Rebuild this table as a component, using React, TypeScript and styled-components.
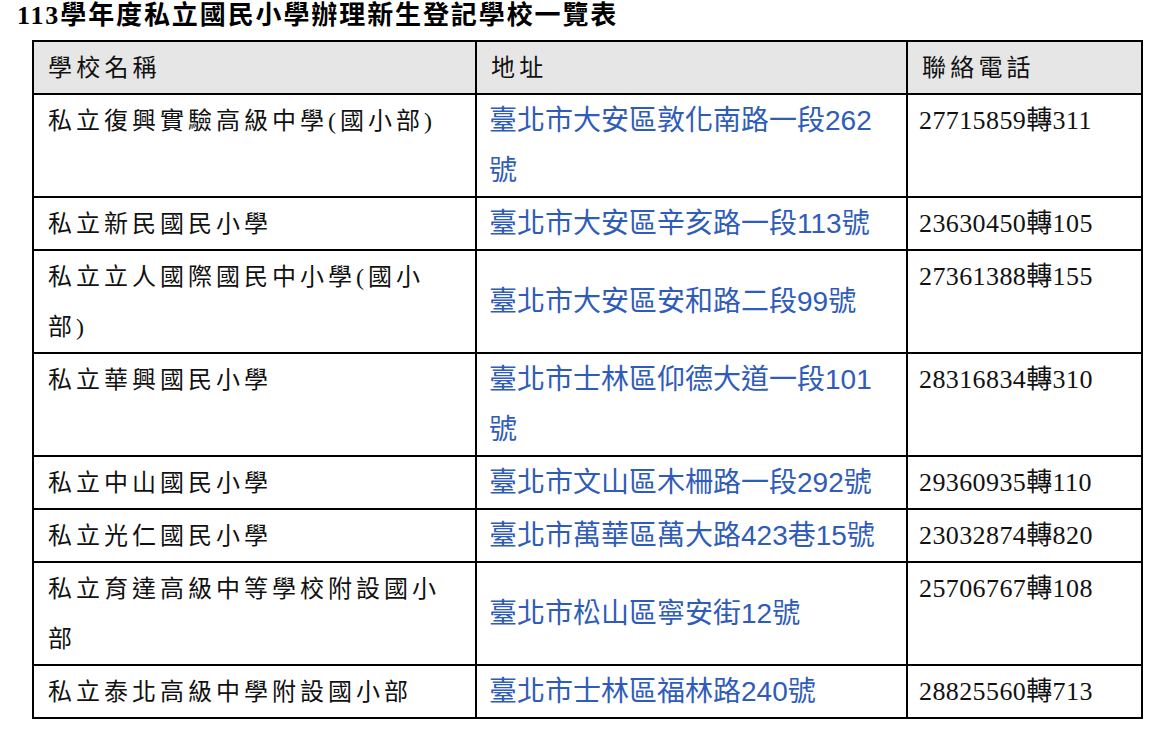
import React from "react";
import styled, { createGlobalStyle } from "styled-components";

const GlobalStyle = createGlobalStyle`
  body {
    margin: 0;
    background: #ffffff;
    color: #111;
  }
`;

const Page = styled.div`
  padding: 1px 0 0 17px;
`;

const Title = styled.h1`
  margin: 0;
  font-family: "Liberation Serif", "Noto Sans CJK TC", serif;
  font-weight: 700;
  font-size: 26px;
  letter-spacing: 1.9px;
  line-height: 30px;
  color: #000;
`;

const Table = styled.table`
  margin: 9px 0 0 15px;
  width: 1109px;
  border-collapse: collapse;
  table-layout: fixed;
`;

const HeadCell = styled.th`
  border: 2px solid #000;
  background: #e6e6e6;
  text-align: left;
  font-weight: 400;
  font-family: "Liberation Serif", "Noto Sans CJK TC", serif;
  font-size: 24px;
  letter-spacing: 4.2px;
  line-height: 50px;
  padding: 1px 12px 0 14px;
  color: #111;
`;

const NameCell = styled.td`
  border: 2px solid #000;
  vertical-align: top;
  font-family: "Liberation Serif", "Noto Sans CJK TC", serif;
  font-size: 24px;
  letter-spacing: 4px;
  line-height: 50px;
  padding: 1px 28px 0 14px;
  color: #111;
`;

const AddressCell = styled.td`
  border: 2px solid #000;
  vertical-align: middle;
  font-family: "Liberation Sans", "Noto Sans CJK TC", sans-serif;
  font-size: 28px;
  line-height: 50px;
  padding: 1px 22px 0 12px;
  color: #2f5cb8;
`;

const PhoneCell = styled.td`
  border: 2px solid #000;
  vertical-align: top;
  font-family: "Liberation Serif", "Noto Sans CJK TC", serif;
  font-size: 26px;
  letter-spacing: 0.4px;
  line-height: 50px;
  padding: 1px 10px 0 11px;
  color: #111;
`;

const schools = [
  { name: "私立復興實驗高級中學(國小部)", address: "臺北市大安區敦化南路一段262號", phone: "27715859轉311" },
  { name: "私立新民國民小學", address: "臺北市大安區辛亥路一段113號", phone: "23630450轉105" },
  { name: "私立立人國際國民中小學(國小部)", address: "臺北市大安區安和路二段99號", phone: "27361388轉155" },
  { name: "私立華興國民小學", address: "臺北市士林區仰德大道一段101號", phone: "28316834轉310" },
  { name: "私立中山國民小學", address: "臺北市文山區木柵路一段292號", phone: "29360935轉110" },
  { name: "私立光仁國民小學", address: "臺北市萬華區萬大路423巷15號", phone: "23032874轉820" },
  { name: "私立育達高級中等學校附設國小部", address: "臺北市松山區寧安街12號", phone: "25706767轉108" },
  { name: "私立泰北高級中學附設國小部", address: "臺北市士林區福林路240號", phone: "28825560轉713" },
];

export default function App() {
  return (
    <>
      <GlobalStyle />
      <Page>
        <Title>113學年度私立國民小學辦理新生登記學校一覽表</Title>
        <Table>
          <colgroup>
            <col style={{ width: 443 }} />
            <col style={{ width: 431 }} />
            <col style={{ width: 235 }} />
          </colgroup>
          <thead>
            <tr>
              <HeadCell>學校名稱</HeadCell>
              <HeadCell>地址</HeadCell>
              <HeadCell>聯絡電話</HeadCell>
            </tr>
          </thead>
          <tbody>
            {schools.map((s) => (
              <tr key={s.name}>
                <NameCell>{s.name}</NameCell>
                <AddressCell>{s.address}</AddressCell>
                <PhoneCell>{s.phone}</PhoneCell>
              </tr>
            ))}
          </tbody>
        </Table>
      </Page>
    </>
  );
}
